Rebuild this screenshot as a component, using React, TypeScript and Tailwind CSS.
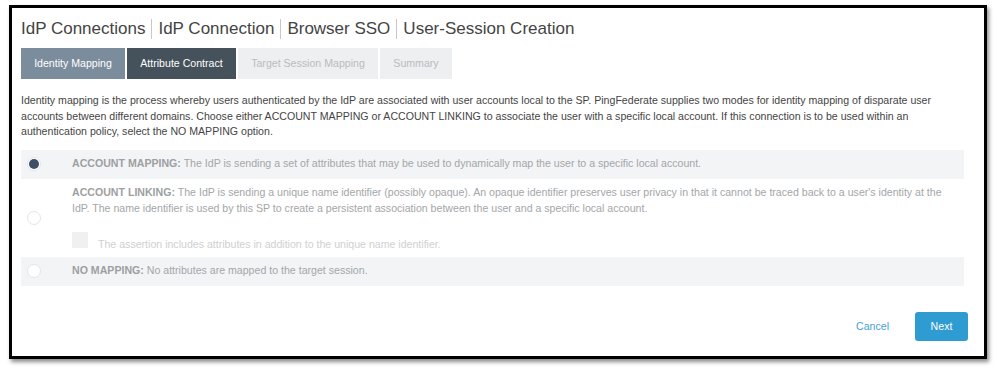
import React from 'react';

const crumbs = ['IdP Connections', 'IdP Connection', 'Browser SSO', 'User-Session Creation'];

const tabs = [
  { label: 'Identity Mapping', cls: 'bg-[#7b8c9c] text-white w-[104px]' },
  { label: 'Attribute Contract', cls: 'bg-[#45525b] text-white w-[109px]' },
  { label: 'Target Session Mapping', cls: 'bg-[#eeeff0] text-[#b9bcbf] w-[140px]' },
  { label: 'Summary', cls: 'bg-[#eeeff0] text-[#b9bcbf] w-[72px]' },
];

function Radio({ checked }: { checked?: boolean }) {
  return (
    <div className="w-[14px] h-[14px] rounded-full border border-[#e3e5e8] bg-white flex items-center justify-center shrink-0">
      {checked && <div className="w-[10px] h-[10px] rounded-full bg-[#3f4f68]" />}
    </div>
  );
}

export default function App() {
  return (
    <div className="w-[998px] h-[372px] bg-white pt-[5px] pl-[9px]" style={{ fontFamily: '"Liberation Sans", Arial, sans-serif' }}>
      <div className="w-[978px] h-[354px] border-[3px] border-black bg-white shadow-[2px_3px_4px_rgba(0,0,0,0.45)] flex flex-col pl-[9px] pr-[20px] pt-[10px]">
        {/* Breadcrumb title */}
        <div className="flex items-center text-[17px] leading-[22px] text-[#444]">
          {crumbs.map((c, i) => (
            <React.Fragment key={c}>
              {i > 0 && <span className="mx-[6px] w-px h-[20px] bg-[#c8c8c8]" />}
              <span>{c}</span>
            </React.Fragment>
          ))}
        </div>

        {/* Wizard tabs */}
        <div className="flex gap-[2px] mt-[8px]">
          {tabs.map(t => (
            <div key={t.label} className={`h-[31px] flex items-center justify-center text-[10.6px] ${t.cls}`}>
              {t.label}
            </div>
          ))}
        </div>

        <p className="mt-[14px] text-[10.6px] leading-[15.5px] text-[#444] pr-[4px]">
          Identity mapping is the process whereby users authenticated by the IdP are associated with user accounts local to the SP. PingFederate supplies two modes for identity mapping of disparate user accounts between different domains. Choose either ACCOUNT MAPPING or ACCOUNT LINKING to associate the user with a specific local account. If this connection is to be used within an authentication policy, select the NO MAPPING option.
        </p>

        {/* Options */}
        <div className="mt-[10px] flex flex-col text-[10.6px] text-[#a4a6a8]">
          <div className="h-[29px] bg-[#f3f4f6] flex items-center pl-[6px]">
            <Radio checked />
            <div className="ml-[31px]">
              <span className="font-bold text-[#9d9fa1]">ACCOUNT MAPPING:</span> The IdP is sending a set of attributes that may be used to dynamically map the user to a specific local account.
            </div>
          </div>

          <div className="h-[78px] flex items-center pl-[6px]">
            <Radio />
            <div className="ml-[31px] flex flex-col self-stretch pt-[5px] pr-[10px]">
              <div className="leading-[16px]">
                <span className="font-bold text-[#9d9fa1]">ACCOUNT LINKING:</span> The IdP is sending a unique name identifier (possibly opaque). An opaque identifier preserves user privacy in that it cannot be traced back to a user's identity at the IdP. The name identifier is used by this SP to create a persistent association between the user and a specific local account.
              </div>
              <div className="flex items-start mt-[16px]">
                <div className="w-[16px] h-[16px] bg-[#f0f0f1] shrink-0" />
                <span className="ml-[10px] mt-[4px] leading-[16px] text-[#cfd0d2]">The assertion includes attributes in addition to the unique name identifier.</span>
              </div>
            </div>
          </div>

          <div className="h-[29px] bg-[#f3f4f6] flex items-center pl-[6px]">
            <Radio />
            <div className="ml-[31px]">
              <span className="font-bold text-[#9d9fa1]">NO MAPPING:</span> No attributes are mapped to the target session.
            </div>
          </div>
        </div>

        {/* Footer */}
        <div className="flex-1 flex items-end justify-end pb-[15px] mr-[-4px]">
          <div className="flex items-center">
            <button className="text-[10.6px] text-[#4a9fd3] mr-[26px]">Cancel</button>
            <button className="w-[53px] h-[29px] rounded-[3px] bg-[#2e9bd1] text-white text-[10.6px]">Next</button>
          </div>
        </div>
      </div>
    </div>
  );
}
